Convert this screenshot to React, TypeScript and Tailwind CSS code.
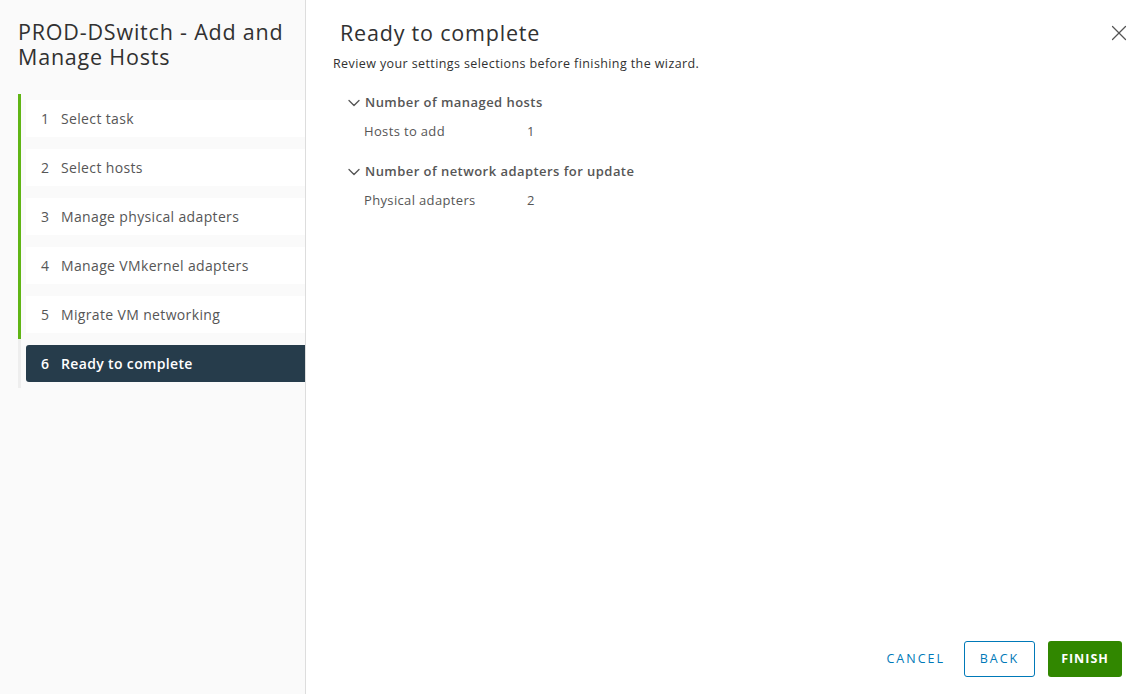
import React from 'react';
import { X, ChevronDown } from 'lucide-react';

const steps = [
  'Select task',
  'Select hosts',
  'Manage physical adapters',
  'Manage VMkernel adapters',
  'Migrate VM networking',
  'Ready to complete',
];

const sections = [
  { title: 'Number of managed hosts', rows: [['Hosts to add', '1']] },
  { title: 'Number of network adapters for update', rows: [['Physical adapters', '2']] },
];

const App: React.FC = () => {
  const active = 5;

  return (
    <div
      className="flex h-[694px] w-[1144px] bg-white text-[#565656]"
      style={{ fontFamily: '"Open Sans", Lato, sans-serif' }}
    >
      {/* Wizard nav */}
      <div className="w-[306px] shrink-0 border-r border-[#dddddd] bg-[#fafafa] pl-[18px]">
        <h1 className="mt-[19px] text-[21.5px] leading-[25px] tracking-[0.8px] text-[#313131]">
          PROD-DSwitch - Add and Manage Hosts
        </h1>
        <div className="mt-[25px] flex flex-col">
          {steps.map((label, i) => {
            const isActive = i === active;
            return (
              <div
                key={label}
                className={`flex border-l-[3px] py-[6px] pl-[5px] ${
                  i < active ? 'border-[#60b515]' : 'border-[#eeeeee]'
                }`}
              >
                <div
                  className={`flex h-[37px] flex-1 items-center pl-[15px] text-[14px] tracking-[0.35px] ${
                    isActive ? 'rounded-l-[3px] bg-[#263c4b] font-semibold text-white' : 'bg-white'
                  }`}
                >
                  <span className="w-[20px]">{i + 1}</span>
                  <span>{label}</span>
                </div>
              </div>
            );
          })}
        </div>
      </div>

      {/* Content */}
      <div className="flex flex-1 flex-col pl-[27px] pr-[12px]">
        <div className="flex items-start justify-between pt-[19px]">
          <h2 className="pl-[7px] text-[21.5px] leading-[28px] tracking-[0.8px] text-[#313131]">
            Ready to complete
          </h2>
          <X className="mt-[1px] h-[26px] w-[26px] text-[#555]" strokeWidth={1.1} />
        </div>
        <p className="mt-[8px] text-[12.5px] tracking-[0.4px] text-[#313131]">
          Review your settings selections before finishing the wizard.
        </p>

        <div className="mt-[19px] flex flex-col gap-[20px] pl-[11px]">
          {sections.map((s) => (
            <div key={s.title}>
              <div className="flex items-center gap-[1px] text-[13px] font-semibold tracking-[0.45px]">
                <ChevronDown className="h-[20px] w-[20px]" strokeWidth={1.6} />
                <span>{s.title}</span>
              </div>
              {s.rows.map(([k, v]) => (
                <div key={k} className="mt-[9.5px] flex pl-[20px] text-[13px] tracking-[0.35px]">
                  <span className="w-[163px]">{k}</span>
                  <span>{v}</span>
                </div>
              ))}
            </div>
          ))}
        </div>

        <div className="mt-auto mb-[17px] flex items-center justify-end gap-[13px] pr-[10px]">
          <button className="h-[36px] pl-[14px] pr-[6px] text-[12.5px] tracking-[2px] text-[#0079b8]">
            CANCEL
          </button>
          <button className="h-[36px] w-[71px] rounded-[3px] border border-[#0079b8] text-[12.5px] tracking-[2px] text-[#0079b8]">
            BACK
          </button>
          <button className="h-[36px] w-[74px] rounded-[3px] bg-[#318700] text-[12.5px] font-bold tracking-[1px] text-white">
            FINISH
          </button>
        </div>
      </div>
    </div>
  );
};

export default App;
